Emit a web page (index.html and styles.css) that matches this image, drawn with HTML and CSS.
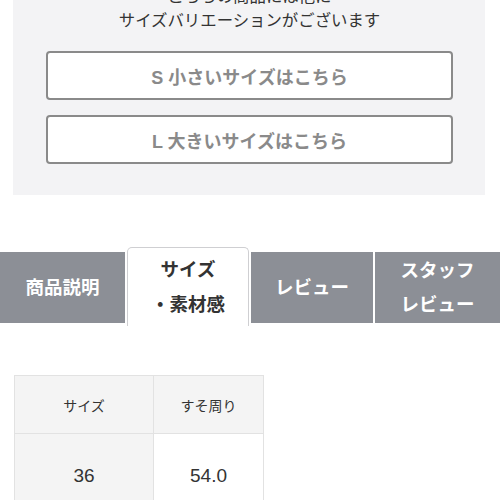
FILE: index.html
```html
<!DOCTYPE html>
<html lang="ja">
<head>
<meta charset="utf-8">
<link rel="stylesheet" href="styles.css">
</head>
<body>
<div class="page">
  <section class="variation">
    <p class="lead">こちらの商品には他に<br>サイズバリエーションがございます</p>
    <a class="size-btn">S 小さいサイズはこちら</a>
    <a class="size-btn">L 大きいサイズはこちら</a>
  </section>

  <nav class="tabs">
    <div class="tab">商品説明</div>
    <div class="tab active">サイズ<br>・素材感</div>
    <div class="tab">レビュー</div>
    <div class="tab two">スタッフ<br>レビュー</div>
  </nav>

  <table class="size-table">
    <tr>
      <th>サイズ</th>
      <th>すそ周り</th>
    </tr>
    <tr>
      <td class="label">36</td>
      <td>54.0</td>
    </tr>
  </table>
</div>
</body>
</html>
```

FILE: styles.css
```css
html, body {
  margin: 0;
  padding: 0;
  background: #ffffff;
}

body {
  font-family: "Liberation Sans", "Noto Sans CJK JP", sans-serif;
  color: #333333;
  overflow: hidden;
}

.page {
  width: 500px;
}

.variation {
  margin: -16px 15px 0 13px;
  background: #f3f3f5;
  padding: 0 32px 31px 33px;
  display: flex;
  flex-direction: column;
}

.lead {
  margin: 0;
  font-size: 16.4px;
  line-height: 24px;
  text-align: center;
  color: #333333;
}

.size-btn {
  margin-top: 19px;
  height: 45px;
  border: 2px solid #8a8a8a;
  border-radius: 4px;
  background: #ffffff;
  display: flex;
  align-items: center;
  justify-content: center;
  font-size: 18px;
  font-weight: bold;
  color: #8a8a8a;
}

.size-btn + .size-btn {
  margin-top: 15px;
}

.tabs {
  margin-top: 57px;
  display: grid;
  grid-template-columns: 125px 122px 122px 1fr;
  column-gap: 2px;
  height: 71px;
}

.tab {
  background: #8c8f96;
  color: #ffffff;
  font-weight: bold;
  font-size: 18.5px;
  display: flex;
  align-items: center;
  justify-content: center;
  text-align: center;
  line-height: 34px;
}

.tab.active {
  background: #ffffff;
  color: #333333;
  border: 1px solid #cfcfd2;
  border-bottom: none;
  border-radius: 5px 5px 0 0;
  margin: -5px 0 -3px;
  line-height: 35px;
  position: relative;
}

.size-table {
  margin: 52px 0 0 14px;
  border-collapse: collapse;
}

.size-table th,
.size-table td {
  border: 1px solid #e2e2e2;
  text-align: center;
  padding: 0;
  color: #333333;
}

.size-table th {
  background: #f4f4f4;
  font-weight: normal;
  font-size: 14px;
  height: 57px;
}

.size-table th:first-child {
  width: 138px;
}

.size-table th:last-child {
  width: 109px;
}

.size-table td {
  font-size: 19px;
  height: 84px;
  background: #ffffff;
}

.size-table td.label {
  background: #f4f4f4;
}
```
